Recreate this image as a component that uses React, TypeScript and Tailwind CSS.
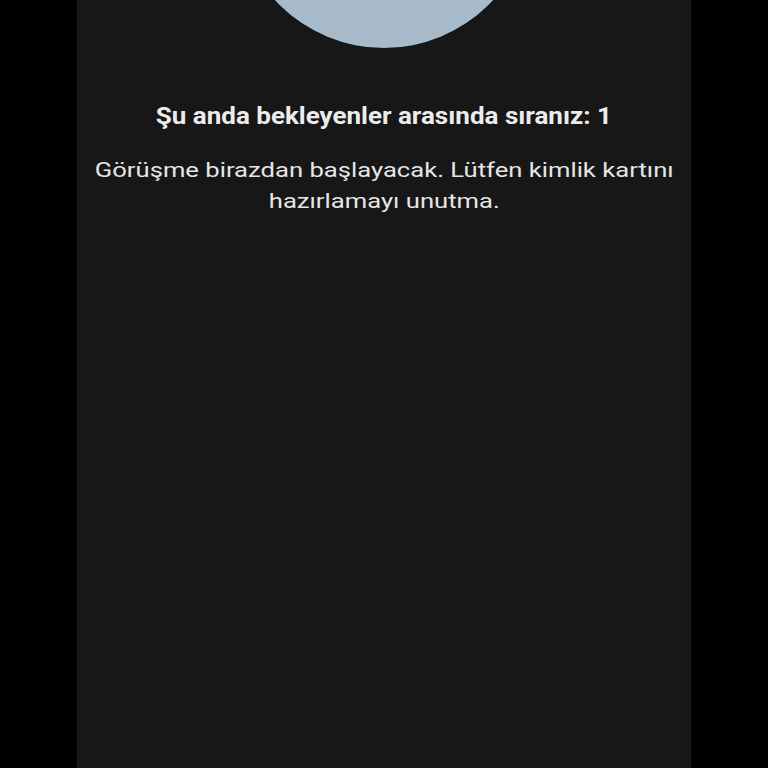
import React from "react";

export default function App() {
  return (
    <div className="min-h-screen w-full bg-black flex justify-center overflow-hidden">
      <div className="w-[614px] h-[768px] bg-[#171717] border-x border-[#202020] flex flex-col items-center overflow-hidden">
        <div className="w-[296px] h-[296px] shrink-0 rounded-full bg-[#a6bac9] mt-[-248px] shadow-[0_0_2px_1px_#0d1a22]" />
        <h1 className="mt-[55px] whitespace-nowrap scale-x-[1.13] text-[23px] leading-[28px] font-bold text-[#ececec] font-['Roboto','Liberation_Sans',sans-serif]">
          Şu anda bekleyenler arasında sıranız: 1
        </h1>
        <p className="mt-[24px] whitespace-nowrap scale-x-[1.22] text-center text-[21px] leading-[31px] text-[#e6e6e6] font-['Roboto','Liberation_Sans',sans-serif]">
          Görüşme birazdan başlayacak. Lütfen kimlik kartını
          <br />
          hazırlamayı unutma.
        </p>
      </div>
    </div>
  );
}
